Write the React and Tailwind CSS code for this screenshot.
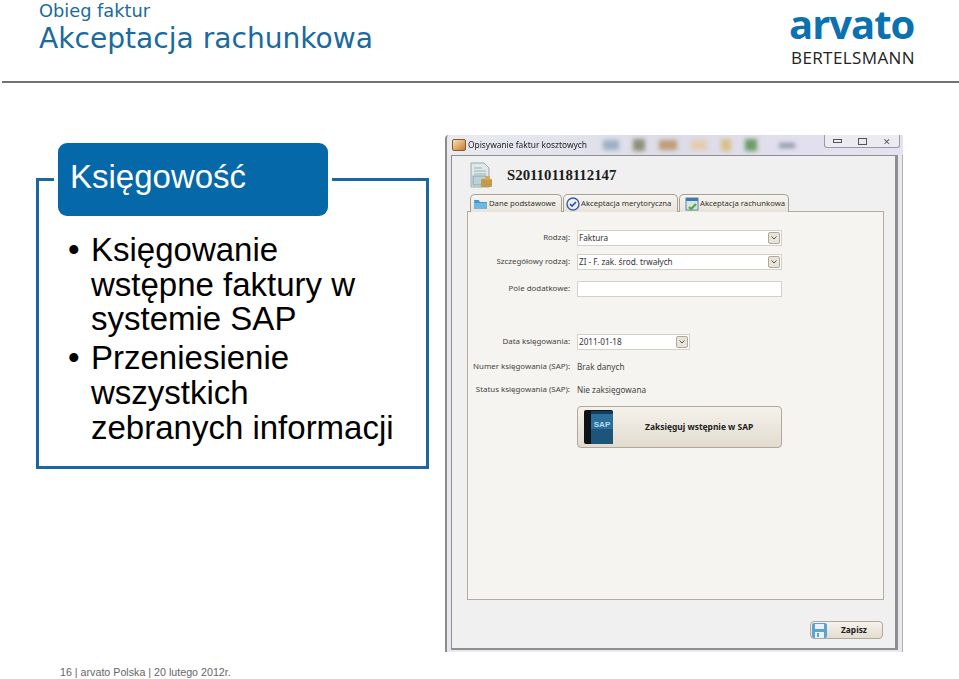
const blue = "text-[#1a6a9e]";

function DocIcon() {
  return (
    <svg width="23" height="26" viewBox="0 0 23 26">
      <path d="M1 1h13l5 5v19H1z" fill="#dfe8ea" stroke="#9aa9ad" />
      <path d="M4 6h8M4 9h12M4 12h12" stroke="#9fb0b5" />
      <rect x="3" y="14" width="13" height="9" fill="#b9d3d8" stroke="#8ea3a8" />
      <rect x="11" y="17" width="11" height="8" rx="1" fill="#c49a48" />
      <rect x="15" y="14" width="5" height="4" fill="#d2ab5f" />
    </svg>
  );
}

function FolderIcon() {
  return (
    <svg width="15" height="13" viewBox="0 0 13 13" preserveAspectRatio="none">
      <path d="M1 3h4l1 2h6v7H1z" fill="#3f9ad3" />
      <path d="M1 6h11v6H1z" fill="#6db7e4" />
    </svg>
  );
}

function CheckIcon() {
  return (
    <svg width="14" height="14" viewBox="0 0 14 14">
      <circle cx="7" cy="7" r="6" fill="#e9eef8" stroke="#3c5da6" strokeWidth="1.4" />
      <path d="M4 7l2 2 4-4" fill="none" stroke="#2d4f9e" strokeWidth="1.6" />
    </svg>
  );
}

function CalendarIcon() {
  return (
    <svg width="14" height="14" viewBox="0 0 14 14">
      <rect x="1" y="1" width="12" height="12" fill="#d5e4ea" stroke="#5e86a8" />
      <rect x="1" y="1" width="12" height="3" fill="#3f79ac" />
      <path d="M4 10l2 2 5-5" fill="none" stroke="#58ad3c" strokeWidth="2.4" />
    </svg>
  );
}

function BookIcon() {
  return (
    <svg width="32" height="36" viewBox="0 0 32 36">
      <path d="M1 3q0-2 2-2h25q2 0 2 2v32H3q-2 0-2-2z" fill="#0d1317" />
      <path d="M8 2h22v33H8z" fill="#2b6f9c" />
      <path d="M8 20h22v15H8z" fill="#1d5479" />
      <path d="M8 2h22v3H8z" fill="#123d5b" />
      <text x="19" y="18" textAnchor="middle" fontSize="8" fontWeight="700" fontFamily="Liberation Sans" fill="#b9dcf0">
        SAP
      </text>
    </svg>
  );
}

function SaveIcon() {
  return (
    <svg width="15" height="15" viewBox="0 0 15 15">
      <rect width="15" height="15" rx="2" fill="#5da3cf" />
      <rect x="3" y="1" width="9" height="5" fill="#e8f2f7" />
      <rect x="3" y="9" width="9" height="6" fill="#e8f2f7" />
      <rect x="5" y="10" width="2" height="4" fill="#5da3cf" />
    </svg>
  );
}

function Tab({ icon, label, box }) {
  return (
    <div className={`${box} h-[18px] flex items-center gap-[1px] mb-[-1px] relative bg-gradient-to-b from-[#f7f5f1] to-[#e9e3d9] border border-b-0 border-[#a89f92] rounded-t-[5px] text-[7.7px] leading-none text-[#333]`}>
      {icon}
      <span className="whitespace-nowrap">{label}</span>
    </div>
  );
}

function Select({ value, width = "w-[205px]" }) {
  return (
    <div className={`${width} h-[16px] flex items-center justify-between pl-[1px] pr-[1px] bg-white border border-[#d5d0c8] text-[8.2px] leading-none text-[#333]`}>
      <span className="whitespace-nowrap">{value}</span>
      <span className="w-[12px] h-[12px] flex items-center justify-center bg-[#e9e4da] border border-[#b0a898] rounded-[2px]">
        <svg width="6" height="4" viewBox="0 0 6 4">
          <path d="M0.5 0.5L3 3l2.5-2.5" fill="none" stroke="#555" />
        </svg>
      </span>
    </div>
  );
}

function Row({ label, children, className }) {
  return (
    <div className={`flex items-center leading-none ${className}`}>
      <span className="w-[102px] shrink-0 text-right text-[7.9px] text-[#444] whitespace-nowrap">{label}</span>
      <div className="ml-[7px] flex items-center min-h-[16px]">{children}</div>
    </div>
  );
}

function AppWindow() {
  return (
    <div className="w-[458px] h-[517px] flex flex-col blur-[0.35px] font-['Noto_Sans',sans-serif]">
      {/* title bar */}
      <div className="h-[20px] shrink-0 flex items-center bg-gradient-to-r from-[#e9eaf2] via-[#dcdce8] to-[#e6e2f2] rounded-tl-[4px] border-l-2 border-[#8c8c8c] relative overflow-hidden">
        <div className="w-[14px] h-[12px] ml-[5px] rounded-[2px] bg-gradient-to-br from-[#f2e3b5] to-[#c97a2a] border border-[#8a5a20]"></div>
        <span className="ml-[2px] text-[8.4px] leading-none text-[#222] whitespace-nowrap">Opisywanie faktur kosztowych</span>
        <div className="flex items-center ml-[16px] gap-[14px] blur-[2px]">
          <div className="w-[16px] h-[10px] bg-[#9cb0c4]"></div>
          <div className="w-[12px] h-[12px] bg-[#8f8f78]"></div>
          <div className="w-[18px] h-[10px] bg-[#c09c78]"></div>
          <div className="w-[16px] h-[10px] bg-[#e6cbb0]"></div>
          <div className="w-[10px] h-[12px] bg-[#d8c088]"></div>
          <div className="w-[12px] h-[12px] bg-[#6c9c68]"></div>
          <div className="w-[16px] h-[5px] ml-[8px] bg-[#8c98a8]"></div>
        </div>
        <div className="absolute right-[3px] top-0 h-[13px] w-[76px] flex items-center justify-around bg-[#ecebf2] border border-t-0 border-[#9a9aa4] rounded-b-[3px]">
          <span className="w-[9px] h-[4px] border border-[#555]"></span>
          <span className="w-[9px] h-[7px] border border-[#555]"></span>
          <span className="text-[9px] leading-none text-[#555]">✕</span>
        </div>
      </div>

      {/* body */}
      <div className="flex-1 flex border-l-2 border-[#8c8c8c] pl-[4px] pr-[4px] pb-[2px] bg-[#e8e8f0] border-r border-r-[#b0b0b0]">
        <div className="flex-1 flex flex-col bg-[#f0f0f0] border border-[#8f8f8f] border-r-[3px] border-b-[2px] pl-[15px] pr-[11px]">
          <div className="h-[38px] shrink-0 flex items-center pl-[3px]">
            <DocIcon />
            <span className="ml-[14px] text-[14.8px] leading-none font-bold text-[#1c1c1c] font-['Liberation_Serif',serif]">S20110118112147</span>
          </div>
          <div className="flex gap-[1px] pl-[3px] shrink-0">
            <Tab icon={<FolderIcon />} label="Dane podstawowe" box="w-[92px] pl-[2px]" />
            <Tab icon={<CheckIcon />} label="Akceptacja merytoryczna" box="w-[115px] pl-[2px]" />
            <Tab icon={<CalendarIcon />} label="Akceptacja rachunkowa" box="w-[110px] pl-[5px]" />
          </div>
          <div className="h-[389px] shrink-0 flex flex-col bg-[#f6f4f0] border border-[#b5aca0] pt-[18px]">
            <Row label="Rodzaj:"><Select value="Faktura" /></Row>
            <Row label="Szczegółowy rodzaj:" className="mt-[8px]"><Select value="ZI - F. zak. środ. trwałych" /></Row>
            <Row label="Pole dodatkowe:" className="mt-[11px]">
              <div className="w-[205px] h-[16px] bg-white border border-[#d5d0c8]"></div>
            </Row>
            <Row label="Data księgowania:" className="mt-[37px]"><Select value="2011-01-18" width="w-[113px]" /></Row>
            <Row label="Numer księgowania (SAP):" className="mt-[9px]"><span className="text-[8.2px] text-[#444]">Brak danych</span></Row>
            <Row label="Status księgowania (SAP):" className="mt-[7px]"><span className="text-[8.2px] text-[#444]">Nie zaksięgowana</span></Row>
            <Row label="" className="mt-[8px]">
              <div className="w-[205px] h-[42px] flex items-center pl-[5px] bg-gradient-to-b from-[#f5f2ec] to-[#e2dccf] border border-[#b0a898] rounded-[4px]">
                <BookIcon />
                <span className="ml-[30px] text-[8.45px] font-bold text-[#222]">Zaksięguj wstępnie w SAP</span>
              </div>
            </Row>
          </div>
          <div className="flex justify-end mt-[21px] pr-[1px]">
            <div className="w-[73px] h-[18px] flex items-center pl-[1px] bg-gradient-to-b from-[#f6f3ed] to-[#e3ddd0] border border-[#b0a898] rounded-[4px]">
              <SaveIcon />
              <span className="ml-[14px] text-[8.4px] leading-none font-bold text-[#222]">Zapisz</span>
            </div>
          </div>
        </div>
      </div>
    </div>
  );
}

export default function App() {
  return (
    <div className="w-[959px] h-[679px] overflow-hidden flex flex-col bg-white">
      <header className="h-[83px] shrink-0 ml-[2px] flex justify-between border-b-2 border-[#737373]">
        <div className={`pl-[37px] ${blue} font-['DejaVu_Sans',sans-serif]`}>
          <div className="text-[17.8px] leading-[21px]">Obieg faktur</div>
          <div className="text-[28.1px] leading-[35px]">Akceptacja rachunkowa</div>
        </div>
        <div className="w-[170px] font-['Open_Sans',sans-serif]">
          <div className="text-[#0a72b0] text-[40px] leading-[48px] font-bold tracking-[-1px]">arvato</div>
          <div className="text-[#222] text-[17px] leading-[20px] tracking-[0.4px] whitespace-nowrap ml-[2px]">BERTELSMANN</div>
        </div>
      </header>

      <div className="h-[569px] shrink-0 flex items-start pl-[36px] font-['Liberation_Sans',sans-serif]">
        <section className="relative mt-[95px] w-[393px] h-[291px] border-[3px] border-[#1b67a2] pl-[29px] pt-[52px]">
          <div className="absolute left-[19px] top-[-38px] w-[270px] h-[73px] pl-[12px] pb-[6px] flex items-center rounded-[9px] bg-[#0568a9] ring-[4px] ring-white text-white text-[33px]">
            Księgowość
          </div>
          <ul className="text-[33px] leading-[34.7px] text-black">
            <li className="flex">
              <span className="w-[23px] shrink-0">•</span>
              <span>Księgowanie<br />wstępne faktury w<br />systemie SAP</span>
            </li>
            <li className="flex mt-[4px]">
              <span className="w-[23px] shrink-0">•</span>
              <span className="whitespace-nowrap">Przeniesienie<br />wszystkich<br />zebranych informacji</span>
            </li>
          </ul>
        </section>
        <div className="ml-[16px] mt-[52px]">
          <AppWindow />
        </div>
      </div>

      <footer className="pl-[60px] text-[10.7px] leading-[13px] text-[#666] font-['Liberation_Sans',sans-serif] mt-[14px] whitespace-nowrap">
        16 | arvato Polska | 20 lutego 2012r.
      </footer>
    </div>
  );
}
